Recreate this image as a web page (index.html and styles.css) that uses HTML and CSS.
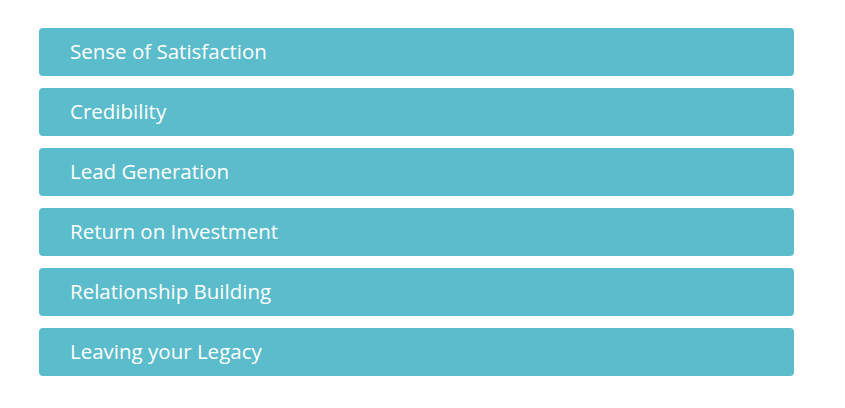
FILE: index.html
```html
<!DOCTYPE html>
<html>
<head>
<meta charset="utf-8">
<link rel="stylesheet" href="styles.css">
</head>
<body>
<div class="list">
  <div class="item">Sense of Satisfaction</div>
  <div class="item">Credibility</div>
  <div class="item">Lead Generation</div>
  <div class="item">Return on Investment</div>
  <div class="item">Relationship Building</div>
  <div class="item">Leaving your Legacy</div>
</div>
</body>
</html>
```
FILE: styles.css
```css
html, body { margin: 0; padding: 0; background: #fff; }
.list {
  width: 755px;
  margin-left: 39px;
  padding-top: 28px;
  display: flex;
  flex-direction: column;
  gap: 12px;
}
.item {
  height: 48px;
  box-sizing: border-box;
  background: #5bbccb;
  border-radius: 4px;
  color: #fff;
  font-family: "Open Sans", sans-serif;
  font-size: 20.5px;
  display: flex;
  align-items: center;
  padding-left: 31px;
  padding-bottom: 3px;
}
```
